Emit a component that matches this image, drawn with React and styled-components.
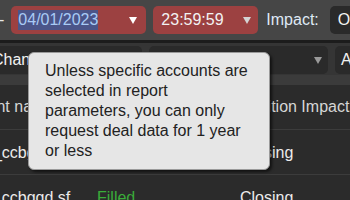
import React from "react";
import styled, { createGlobalStyle } from "styled-components";

const GlobalStyle = createGlobalStyle`
  html, body {
    margin: 0;
    padding: 0;
    background: #2b2b2b;
  }
`;

const Page = styled.div`
  position: relative;
  width: 350px;
  height: 200px;
  overflow: hidden;
  background: #2b2b2b;
  font-family: "Liberation Sans", Arial, sans-serif;
  font-size: 16px;
  color: #ececec;
`;

const TopBar = styled.div`
  display: flex;
  align-items: center;
  gap: 7px;
  height: 40px;
  background: #464646;
  border-bottom: 3px solid #1c1c1c;
  white-space: nowrap;
`;

const Dash = styled.span`
  margin-left: -1px;
  color: #e8e8e8;
`;

const Label = styled.span`
  margin-left: 1px;
  margin-right: 4px;
  color: #dfe9f5;
`;

const FilterBar = styled.div`
  display: flex;
  align-items: flex-start;
  gap: 7px;
  height: 32px;
  padding-top: 3px;
  box-sizing: border-box;
  background: #353535;
  white-space: nowrap;
`;

const Strip = styled.div`
  height: 10px;
  background: #3b3b3b;
`;

const Select = styled.div`
  display: flex;
  align-items: center;
  justify-content: space-between;
  flex: none;
  box-sizing: border-box;
  width: ${(p) => p.$width}px;
  height: 28px;
  margin-left: ${(p) => p.$offset || 0}px;
  padding: 0 ${(p) => p.$padRight || 8}px 0 ${(p) => p.$padLeft || 8}px;
  border-radius: 5px;
  background: ${(p) => (p.$tone === "red" ? "#9c4141" : "#2a2a2a")};
  color: #f2f2f2;
  line-height: 20px;
`;

const Highlight = styled.span`
  background: #4b5589;
  color: #a9cbf5;
`;

const Caret = styled.span`
  flex: none;
  width: 0;
  height: 0;
  border-left: 4px solid transparent;
  border-right: 4px solid transparent;
  border-top: 7px solid ${(p) => p.$color};
`;

const Table = styled.div`
  margin-left: -48px;
`;

const Row = styled.div`
  display: grid;
  grid-template-columns: 145px 143px 1fr;
  align-items: center;
  height: ${(p) => (p.$head ? 44 : 45)}px;
  border-top: ${(p) => (p.$head ? "none" : "1px solid #3c3c3c")};
  box-sizing: border-box;
  white-space: nowrap;
  color: ${(p) => (p.$head ? "#d6d6d6" : "#ececec")};
`;

const Cell = styled.div`
  overflow: hidden;
  padding-top: ${(p) => (p.$head ? 0 : 1)}px;
  color: ${(p) => (p.$status === "Filled" ? "#3aac3a" : "inherit")};
`;

const Tooltip = styled.div`
  position: absolute;
  left: 28px;
  top: 52px;
  width: 242px;
  box-sizing: border-box;
  padding: 8px 14px 8px 16px;
  background: #e6e6e6;
  border: 1px solid #9a9a9a;
  border-radius: 6px;
  box-shadow: 2px 2px 3px rgba(0, 0, 0, 0.6);
  color: #222;
  font-size: 16px;
  line-height: 20px;
`;

const deals = [
  { account: "TEST_ccbgqd sf", status: "Filled", impact: "Closing" },
  { account: "TEST_ccbgqd sf", status: "Filled", impact: "Closing" },
];

export default function App() {
  return (
    <Page>
      <GlobalStyle />
      <TopBar>
        <Dash>-</Dash>
        <Select $tone="red" $width={135} $padLeft={7} $padRight={9}>
          <Highlight>04/01/2023</Highlight>
          <Caret $color="#ffffff" />
        </Select>
        <Select $tone="red" $width={105} $padRight={7}>
          <span>23:59:59</span>
          <Caret $color="#d4d4d4" />
        </Select>
        <Label>Impact:</Label>
        <Select $width={90}>
          <span>Open</span>
        </Select>
      </TopBar>
      <FilterBar>
        <Select $width={158} $offset={-16}>
          <span>Channel</span>
          <Caret $color="#9a9a9a" />
        </Select>
        <Select $width={179} $padRight={6}>
          <span />
          <Caret $color="#9a9a9a" />
        </Select>
        <Select $width={80} $padLeft={6}>
          <span>All</span>
        </Select>
      </FilterBar>
      <Strip />
      <Table>
        <Row $head>
          <Cell $head>Account name</Cell>
          <Cell $head>Status</Cell>
          <Cell $head>Position Impact</Cell>
        </Row>
        {deals.map((d, i) => (
          <Row key={i}>
            <Cell>{d.account}</Cell>
            <Cell $status={d.status}>{d.status}</Cell>
            <Cell>{d.impact}</Cell>
          </Row>
        ))}
      </Table>
      <Tooltip>
        Unless specific accounts are selected in report parameters, you can
        only request deal data for 1 year or less
      </Tooltip>
    </Page>
  );
}
